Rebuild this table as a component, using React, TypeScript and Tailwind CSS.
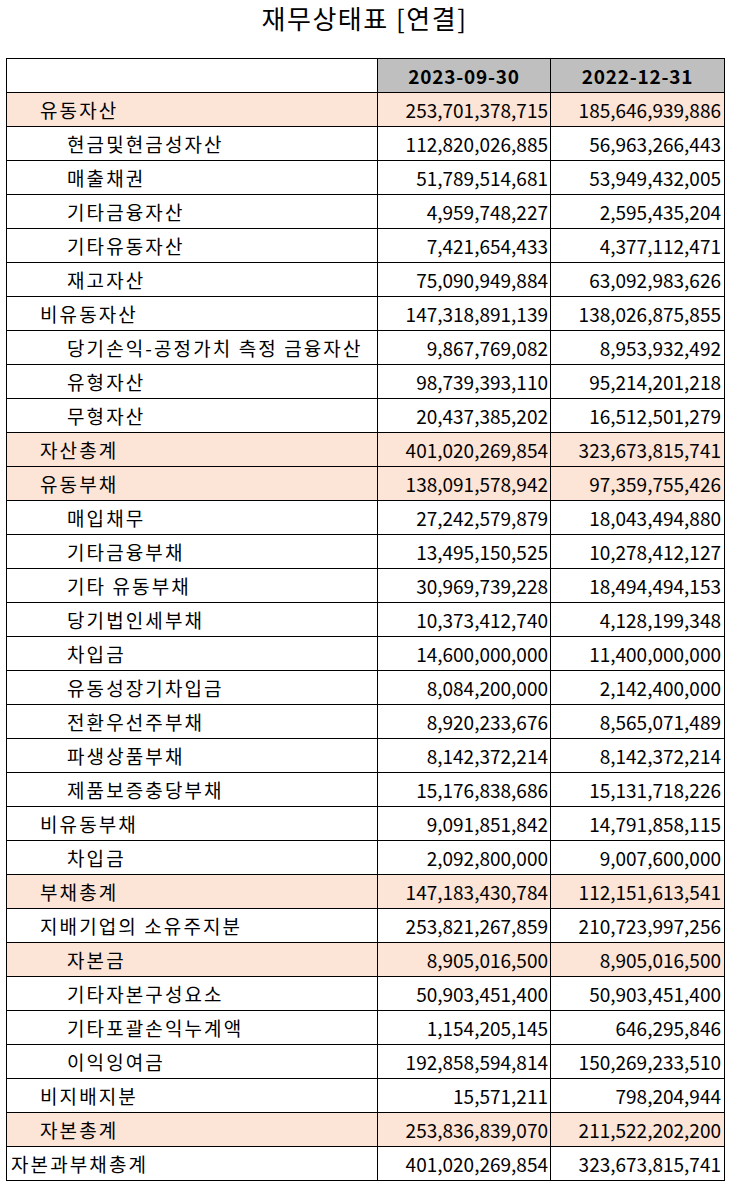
type Row = {
  label: string
  a: string
  b: string
  level: 0 | 1 | 2
  hl?: boolean
}

const rows: Row[] = [
  { label: '유동자산', a: '253,701,378,715', b: '185,646,939,886', level: 1, hl: true },
  { label: '현금및현금성자산', a: '112,820,026,885', b: '56,963,266,443', level: 2 },
  { label: '매출채권', a: '51,789,514,681', b: '53,949,432,005', level: 2 },
  { label: '기타금융자산', a: '4,959,748,227', b: '2,595,435,204', level: 2 },
  { label: '기타유동자산', a: '7,421,654,433', b: '4,377,112,471', level: 2 },
  { label: '재고자산', a: '75,090,949,884', b: '63,092,983,626', level: 2 },
  { label: '비유동자산', a: '147,318,891,139', b: '138,026,875,855', level: 1 },
  { label: '당기손익-공정가치 측정 금융자산', a: '9,867,769,082', b: '8,953,932,492', level: 2 },
  { label: '유형자산', a: '98,739,393,110', b: '95,214,201,218', level: 2 },
  { label: '무형자산', a: '20,437,385,202', b: '16,512,501,279', level: 2 },
  { label: '자산총계', a: '401,020,269,854', b: '323,673,815,741', level: 1, hl: true },
  { label: '유동부채', a: '138,091,578,942', b: '97,359,755,426', level: 1, hl: true },
  { label: '매입채무', a: '27,242,579,879', b: '18,043,494,880', level: 2 },
  { label: '기타금융부채', a: '13,495,150,525', b: '10,278,412,127', level: 2 },
  { label: '기타 유동부채', a: '30,969,739,228', b: '18,494,494,153', level: 2 },
  { label: '당기법인세부채', a: '10,373,412,740', b: '4,128,199,348', level: 2 },
  { label: '차입금', a: '14,600,000,000', b: '11,400,000,000', level: 2 },
  { label: '유동성장기차입금', a: '8,084,200,000', b: '2,142,400,000', level: 2 },
  { label: '전환우선주부채', a: '8,920,233,676', b: '8,565,071,489', level: 2 },
  { label: '파생상품부채', a: '8,142,372,214', b: '8,142,372,214', level: 2 },
  { label: '제품보증충당부채', a: '15,176,838,686', b: '15,131,718,226', level: 2 },
  { label: '비유동부채', a: '9,091,851,842', b: '14,791,858,115', level: 1 },
  { label: '차입금', a: '2,092,800,000', b: '9,007,600,000', level: 2 },
  { label: '부채총계', a: '147,183,430,784', b: '112,151,613,541', level: 1, hl: true },
  { label: '지배기업의 소유주지분', a: '253,821,267,859', b: '210,723,997,256', level: 1 },
  { label: '자본금', a: '8,905,016,500', b: '8,905,016,500', level: 2, hl: true },
  { label: '기타자본구성요소', a: '50,903,451,400', b: '50,903,451,400', level: 2 },
  { label: '기타포괄손익누계액', a: '1,154,205,145', b: '646,295,846', level: 2 },
  { label: '이익잉여금', a: '192,858,594,814', b: '150,269,233,510', level: 2 },
  { label: '비지배지분', a: '15,571,211', b: '798,204,944', level: 1 },
  { label: '자본총계', a: '253,836,839,070', b: '211,522,202,200', level: 1, hl: true },
  { label: '자본과부채총계', a: '401,020,269,854', b: '323,673,815,741', level: 0 },
]

const indent = ['pl-[4px]', 'pl-[33px]', 'pl-[60px]']

export default function App() {
  return (
    <div className="min-h-[1185px] w-[729px] bg-white text-black font-['Noto_Sans_CJK_KR','Noto_Sans',sans-serif]">
      <h1 className="pt-[1px] h-[58px] text-center text-[26px] leading-[34px] font-normal tracking-[1.5px]">재무상태표 [연결]</h1>
      <table className="ml-[6px] w-[718px] border-collapse table-fixed">
        <colgroup>
          <col className="w-[371px]" />
          <col className="w-[173px]" />
          <col className="w-[174px]" />
        </colgroup>
        <thead>
          <tr className="h-[34px]">
            <th className="border border-black bg-white" />
            <th className="border border-black bg-[#bfbfbf] text-center text-[19px] font-bold leading-none tracking-[0.8px]">2023-09-30</th>
            <th className="border border-black bg-[#bfbfbf] text-center text-[19px] font-bold leading-none tracking-[0.8px]">2022-12-31</th>
          </tr>
        </thead>
        <tbody>
          {rows.map((r, i) => (
            <tr key={i} className={`h-[34px] ${r.hl ? 'bg-[#fce4d6]' : 'bg-white'}`}>
              <td className={`border border-black text-[19px] leading-none whitespace-nowrap tracking-[2.1px] ${indent[r.level]}`}>{r.label}</td>
              <td className="border border-black text-right pr-[2px] text-[19px] leading-none">{r.a}</td>
              <td className="border border-black text-right pr-[3px] text-[19px] leading-none">{r.b}</td>
            </tr>
          ))}
        </tbody>
      </table>
    </div>
  )
}
